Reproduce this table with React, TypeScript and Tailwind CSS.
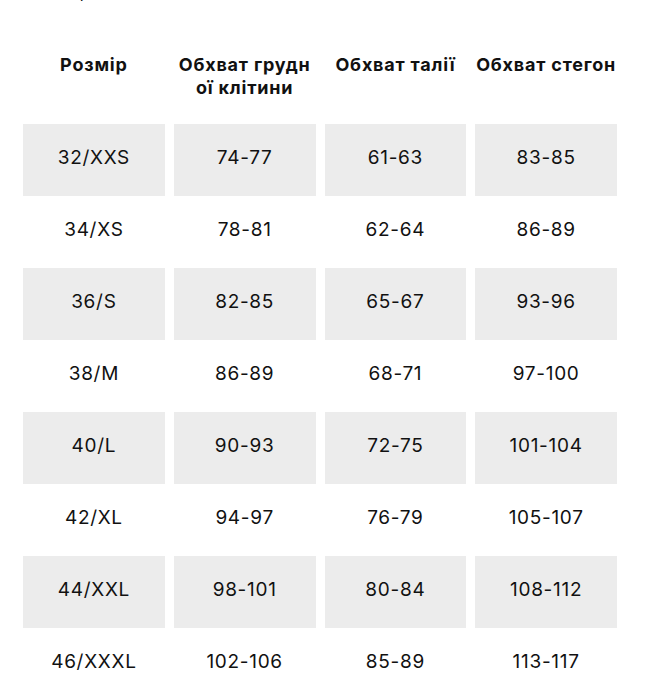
const headers = [
  { text: "Розмір", w: "max-w-full" },
  { text: "Обхват грудної клітини", w: "max-w-[134px]" },
  { text: "Обхват талії", w: "max-w-full" },
  { text: "Обхват стегон", w: "max-w-full" },
];

const rows = [
  ["32/XXS", "74-77", "61-63", "83-85"],
  ["34/XS", "78-81", "62-64", "86-89"],
  ["36/S", "82-85", "65-67", "93-96"],
  ["38/M", "86-89", "68-71", "97-100"],
  ["40/L", "90-93", "72-75", "101-104"],
  ["42/XL", "94-97", "76-79", "105-107"],
  ["44/XXL", "98-101", "80-84", "108-112"],
  ["46/XXXL", "102-106", "85-89", "113-117"],
];

export default function App() {
  return (
    <div className="w-[647px] h-[700px] overflow-hidden bg-white text-[#111] font-['Inter','Liberation_Sans',sans-serif]">
      {/* title, scrolled mostly out of view */}
      <div className="h-[20px] -mt-[18px] pl-[36px] text-[16px] leading-[20px]">Розмірна сітка</div>

      <div className="ml-[23px] w-[594px] grid grid-cols-4 gap-x-[9px]">
        {headers.map((h) => (
          <div key={h.text} className="h-[122px] pt-[51px] flex justify-center">
            <span className={`${h.w} text-center text-[18px] leading-[23px] font-bold tracking-[0.8px] break-all`}>
              {h.text}
            </span>
          </div>
        ))}

        {rows.map((row, i) =>
          row.map((cell, j) => (
            <div
              key={`${i}-${j}`}
              className={`h-[72px] flex items-center justify-center pb-[4px] text-[19px] tracking-[0.7px] ${i % 2 === 0 ? "bg-[#ececec]" : "bg-white"}`}
            >
              {cell}
            </div>
          ))
        )}
      </div>
    </div>
  );
}
